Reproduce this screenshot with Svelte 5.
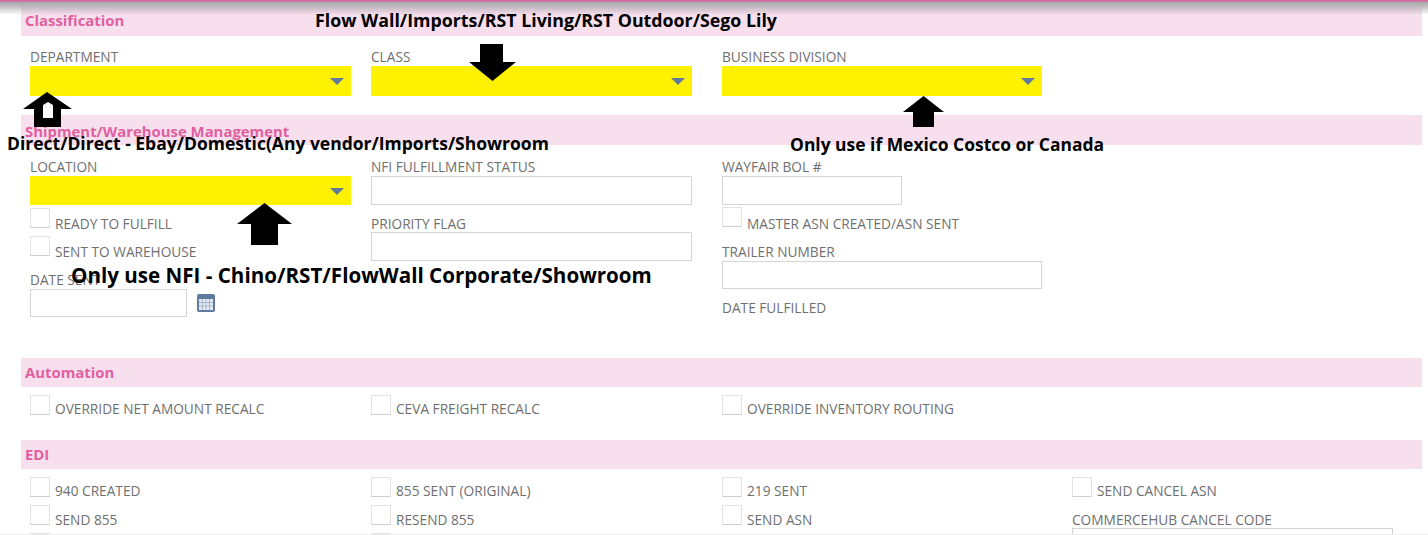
<script>
  const automation = ['OVERRIDE NET AMOUNT RECALC', 'CEVA FREIGHT RECALC', 'OVERRIDE INVENTORY ROUTING'];
  const edi = [
    ['940 CREATED', 'SEND 855', ''],
    ['855 SENT (ORIGINAL)', 'RESEND 855', ''],
    ['219 SENT', 'SEND ASN'],
  ];
</script>

{#snippet check(text)}
  <label class="check"><span class="box"></span><span class="txt">{text}</span></label>
{/snippet}

{#snippet dropdown()}
  <div class="select"><span class="caret"></span></div>
{/snippet}

<div class="page">
  <div class="topline"></div>

  <div class="bar first">Classification</div>
  <div class="cols classification">
    <div><div class="lbl">DEPARTMENT</div>{@render dropdown()}</div>
    <div><div class="lbl">CLASS</div>{@render dropdown()}</div>
    <div class="third"><div class="lbl">BUSINESS DIVISION</div>{@render dropdown()}</div>
  </div>

  <div class="bar second">Shipment/Warehouse Management</div>
  <div class="cols shipment">
    <div>
      <div class="lbl">LOCATION</div>
      {@render dropdown()}
      {@render check('READY TO FULFILL')}
      {@render check('SENT TO WAREHOUSE')}
      <div class="lbl date-lbl">DATE SENT</div>
      <div class="date-row">
        <div class="input date"></div>
        <svg class="cal" width="18" height="18" viewBox="0 0 18 18">
          <rect width="18" height="18" rx="2" fill="#607a9f" />
          <rect x="2" y="5" width="14" height="11" fill="#e4e9f1" />
          <path d="M5.5 5v11M9 5v11M12.5 5v11M2 8.5h14M2 12h14" stroke="#a9b7cc" stroke-width="1" />
        </svg>
      </div>
    </div>
    <div>
      <div class="lbl">NFI FULFILLMENT STATUS</div>
      <div class="input"></div>
      <div class="lbl priority">PRIORITY FLAG</div>
      <div class="input"></div>
    </div>
    <div class="third">
      <div class="lbl">WAYFAIR BOL #</div>
      <div class="input short"></div>
      {@render check('MASTER ASN CREATED/ASN SENT')}
      <div class="lbl trailer">TRAILER NUMBER</div>
      <div class="input trailer-input"></div>
      <div class="lbl fulfilled">DATE FULFILLED</div>
    </div>
  </div>

  <div class="bar thin">Automation</div>
  <div class="cols automation">
    {#each automation as text}
      <div>{@render check(text)}</div>
    {/each}
  </div>

  <div class="bar thin">EDI</div>
  <div class="cols edi">
    {#each edi as col}
      <div class="edi-col">
        {#each col as text}
          {@render check(text)}
        {/each}
      </div>
    {/each}
    <div class="edi-col">
      {@render check('SEND CANCEL ASN')}
      <div class="lbl commerce">COMMERCEHUB CANCEL CODE</div>
      <div class="input"></div>
    </div>
  </div>

  <!-- annotations pasted over the form -->
  <div class="note n1">Flow Wall/Imports/RST Living/RST Outdoor/Sego Lily</div>
  <div class="note n2">Direct/Direct - Ebay/Domestic(Any vendor/Imports/Showroom</div>
  <div class="note n3">Only use if Mexico Costco or Canada</div>
  <div class="note n4">Only use NFI - Chino/RST/FlowWall Corporate/Showroom</div>

  <svg class="arrow a1" width="47" height="37" viewBox="0 0 47 37">
    <path d="M11 0h23v18h13L23.500 37 0 18h11z" fill="#000" />
  </svg>
  <svg class="arrow a2" width="49" height="35" viewBox="0 0 49 35">
    <path d="M24 0l25 17H38v18H11V17H0z" fill="#000" />
    <path d="M20 13l5-3 5 3v13H20z" fill="#fff" />
  </svg>
  <svg class="arrow a3" width="55" height="42" viewBox="0 0 55 42">
    <path d="M27.5 0L55 21H41v21H14V21H0z" fill="#000" />
  </svg>
  <svg class="arrow a4" width="41" height="31" viewBox="0 0 41 31">
    <path d="M20.500 0L41 16H31v15H10V16H0z" fill="#000" />
  </svg>
</div>

<style>
  :global(body) {
    margin: 0;
    background: #fff;
  }
  .page {
    position: relative;
    width: 1428px;
    height: 535px;
    box-sizing: border-box;
    overflow: hidden;
    padding-left: 21px;
    border-bottom: 1px solid #eeeeee;
    font-family: "Open Sans", sans-serif;
    font-size: 13.7px;
    color: #6f6f6f;
  }
  .topline {
    position: absolute;
    top: 0;
    left: 0;
    right: 0;
    height: 15px;
    background: linear-gradient(#d9659f 0, #d9659f 1px, #aaa3a8 2px, rgba(170, 165, 170, 0.75) 6px, rgba(220, 220, 220, 0) 15px);
  }
  .bar {
    width: 1401px;
    height: 30px;
    box-sizing: border-box;
    padding-left: 4px;
    background: #f7dfed;
    color: #e05fa0;
    font-size: 14.9px;
    font-weight: 700;
    line-height: 30px;
  }
  .bar.first {
    margin-top: 6px;
    line-height: 29px;
  }
  .bar.second {
    line-height: 32px;
  }
  .bar.thin {
    height: 29px;
    line-height: 29px;
  }
  .cols {
    display: grid;
    grid-template-columns: 341px 351px 350px 350px;
    padding-left: 9px;
  }
  .classification {
    height: 79px;
    padding-top: 13px;
    box-sizing: border-box;
  }
  .classification .lbl {
    height: 17px;
  }
  .shipment {
    height: 213px;
    padding-top: 14px;
    box-sizing: border-box;
  }
  .shipment .lbl {
    height: 17px;
  }
  .shipment .lbl.priority {
    height: 16px;
  }
  .shipment .select {
    height: 29px;
  }
  .automation {
    height: 53px;
    padding-top: 8px;
    box-sizing: border-box;
  }
  .edi {
    padding-top: 8px;
  }
  .lbl {
    height: 16px;
    line-height: 16px;
    white-space: nowrap;
  }
  .select {
    position: relative;
    width: 321px;
    height: 30px;
    background: #fff200;
  }
  .third .select,
  .third .input {
    width: 320px;
  }
  .caret {
    position: absolute;
    right: 7px;
    top: 12px;
    border-left: 7px solid transparent;
    border-right: 7px solid transparent;
    border-top: 7px solid #5f7a9e;
  }
  .input {
    width: 321px;
    height: 29px;
    box-sizing: border-box;
    border: 1px solid #d5d5d5;
    background: #fff;
  }
  .third .input.short {
    width: 180px;
  }
  .input.date {
    width: 157px;
    height: 28px;
  }
  .input.trailer-input {
    height: 28px;
  }
  .date-row {
    display: flex;
    align-items: flex-start;
    gap: 10px;
  }
  .cal {
    margin-top: 5px;
  }
  .date-lbl {
    margin-top: 16px;
  }
  .priority {
    margin-top: 11px;
  }
  .trailer {
    margin-top: 17px;
  }
  .fulfilled {
    margin-top: 11px;
  }
  .check {
    display: flex;
    align-items: flex-end;
    gap: 5px;
    height: 20px;
    margin-top: 8px;
    line-height: 16px;
    white-space: nowrap;
  }
  .txt {
    position: relative;
    top: 2px;
  }
  .shipment .txt {
    top: 4px;
  }
  .shipment .third .txt {
    top: 5px;
  }
  .cols > div > .check:first-child {
    margin-top: 0;
  }
  .shipment .check {
    margin-top: 3px;
  }
  .shipment .third .check {
    margin-top: 2px;
  }
  .shipment .check + .check {
    margin-top: 8px;
  }
  .box {
    flex: none;
    width: 20px;
    height: 20px;
    box-sizing: border-box;
    border: 1px solid #e2e2e2;
    border-bottom-color: #cfcfcf;
    background: #fff;
  }
  .edi-col .check {
    margin-top: 8px;
  }
  .edi-col .check + .check .txt {
    top: 3px;
  }
  .commerce {
    margin-top: 15px;
  }
  .note {
    position: absolute;
    color: #000;
    font-weight: 700;
    white-space: nowrap;
    line-height: 20px;
  }
  .n1 {
    left: 315px;
    top: 10px;
    font-size: 17.8px;
  }
  .n2 {
    left: 7px;
    top: 133px;
    font-size: 17.5px;
  }
  .n3 {
    left: 790px;
    top: 134px;
    font-size: 17.45px;
  }
  .n4 {
    left: 71px;
    top: 265px;
    font-size: 20.6px;
  }
  .arrow {
    position: absolute;
  }
  .a1 {
    left: 469px;
    top: 44px;
  }
  .a2 {
    left: 23px;
    top: 92px;
  }
  .a3 {
    left: 237px;
    top: 203px;
  }
  .a4 {
    left: 903px;
    top: 96px;
  }
</style>
